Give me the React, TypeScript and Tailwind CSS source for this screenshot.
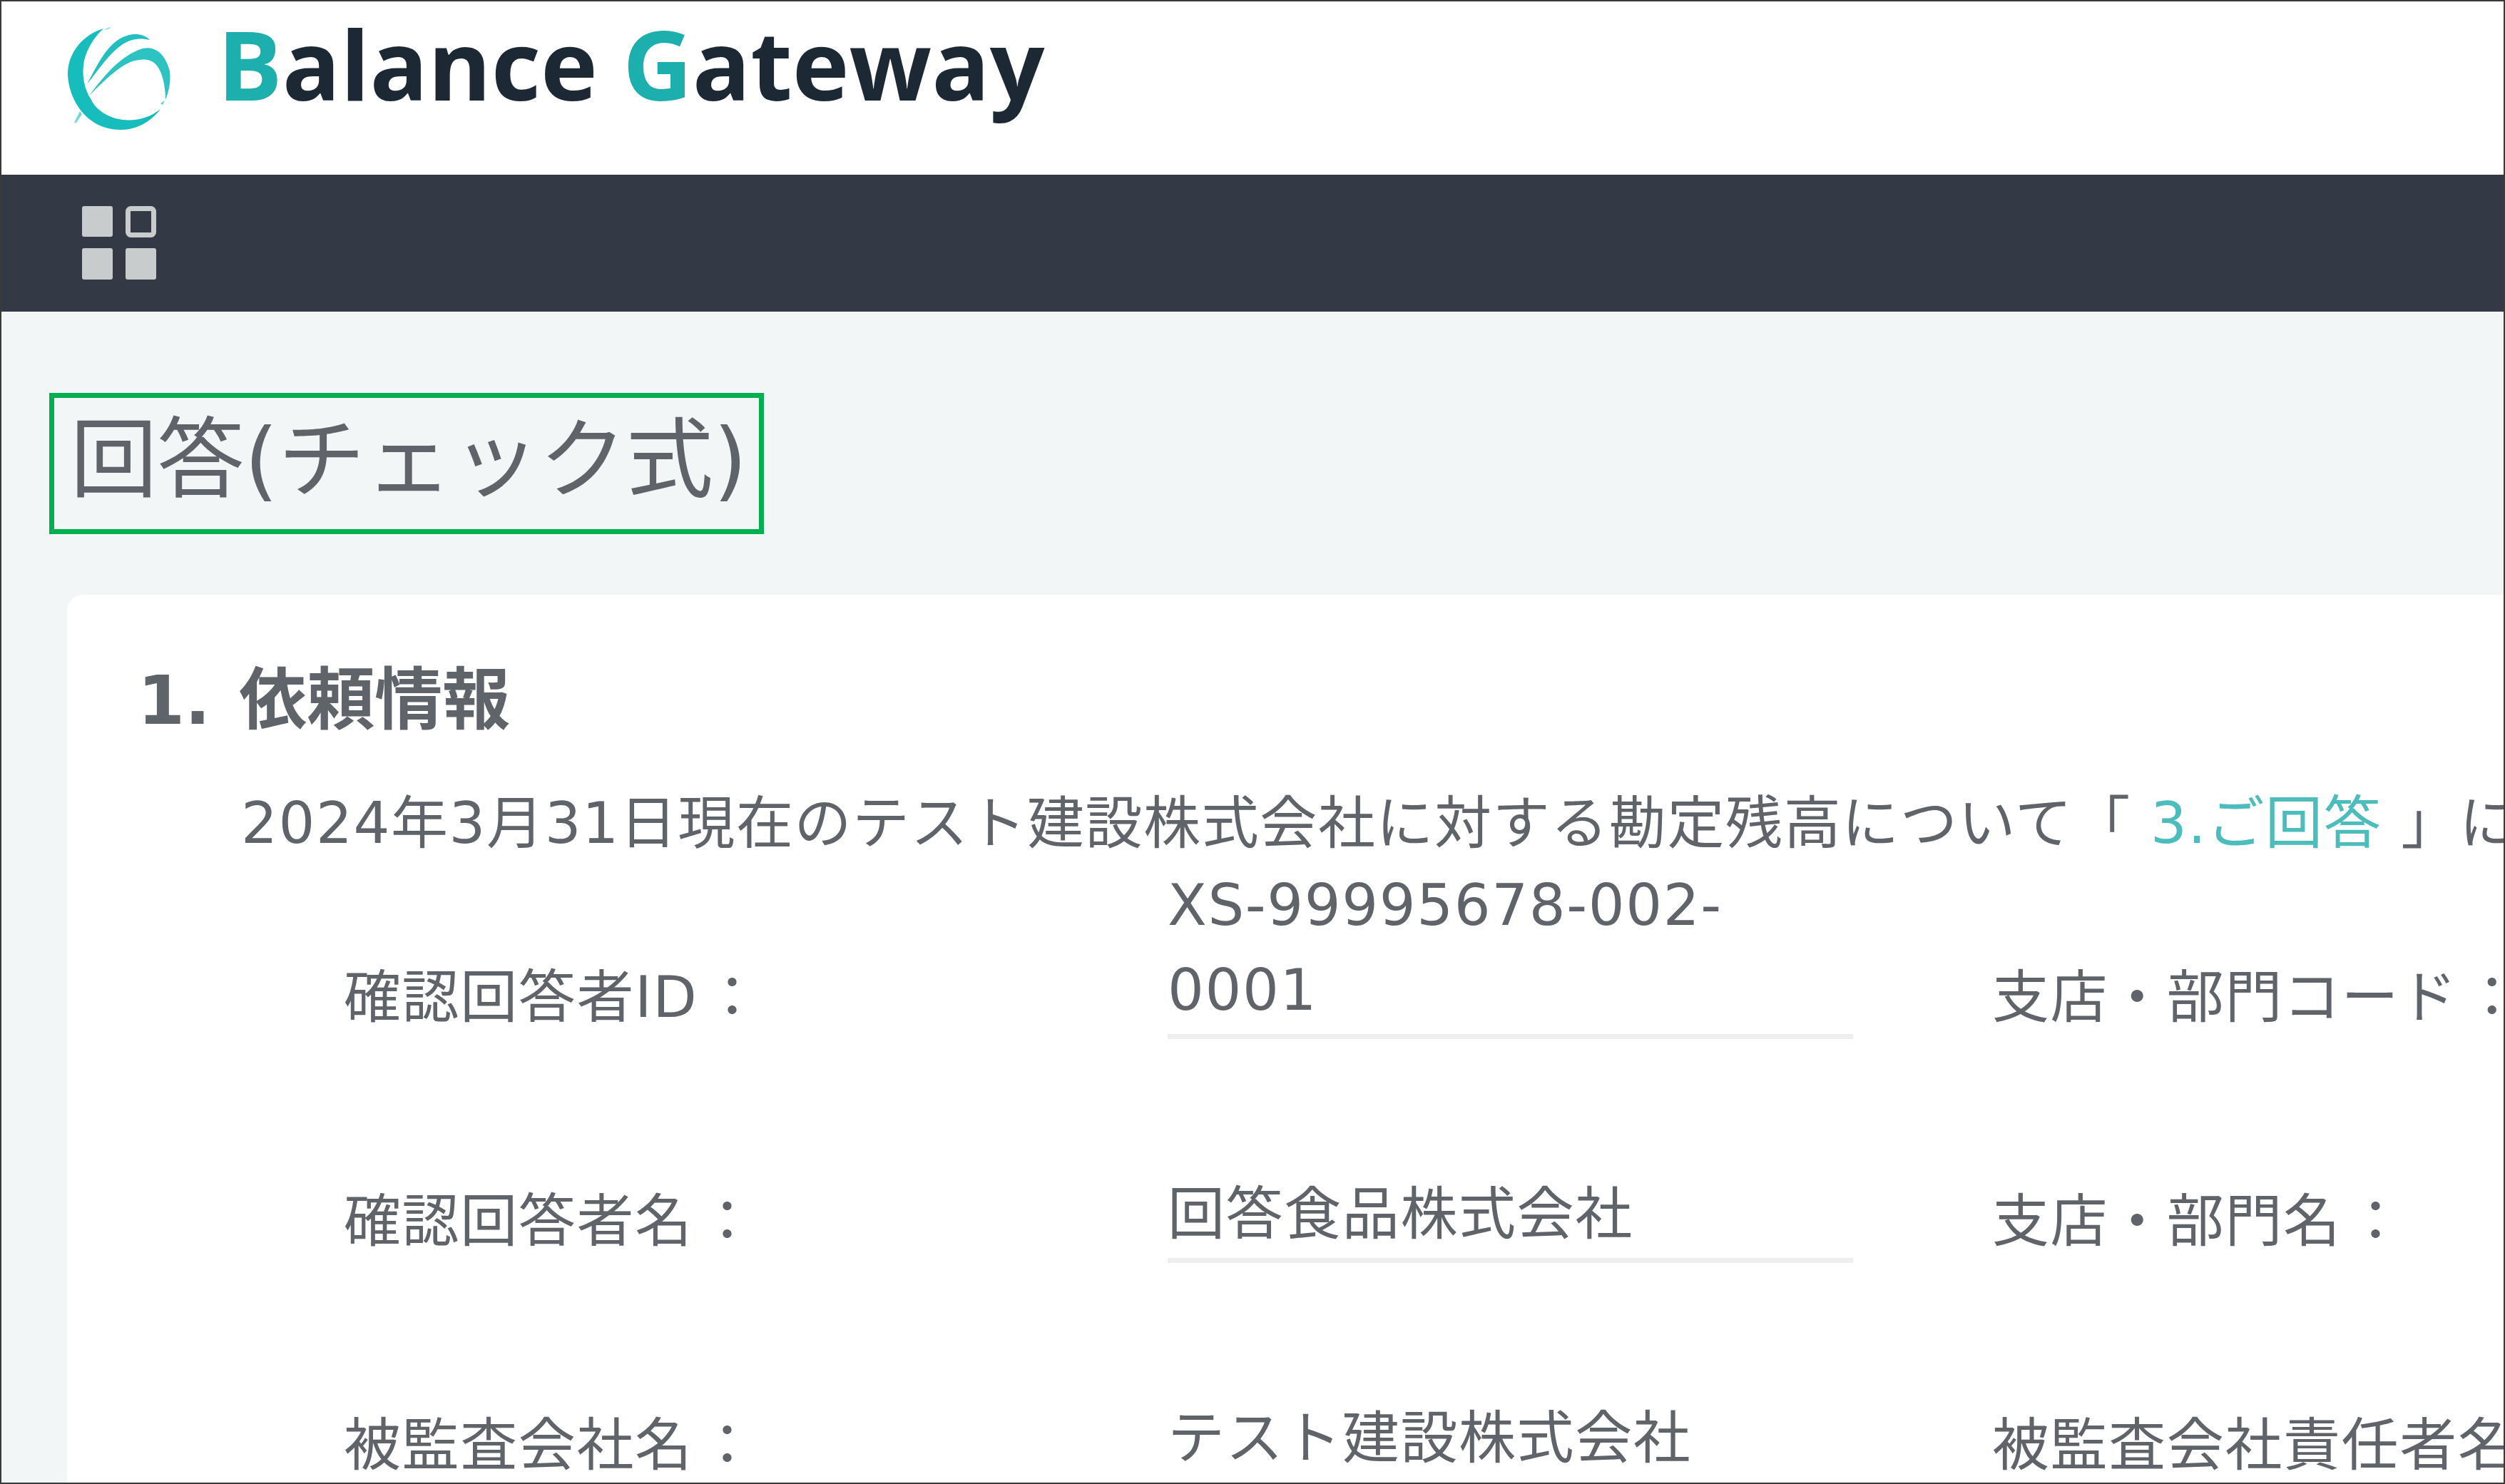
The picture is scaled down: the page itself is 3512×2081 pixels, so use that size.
import React from "react";

const jp = "font-['DejaVu_Sans','Noto_Sans_CJK_JP',sans-serif]";

const Logo = () => (
  <svg viewBox="0 0 200 200" className="w-[200px] h-[200px] shrink-0" fill="#17bcbc">
    <path d="M85 30 C58 38 36 62 35 92 C35 125 58 172 110 172 C132 172 152 160 165 143 C150 155 132 160 112 158 C90 155 74 143 68 130 C58 115 54 95 58 75 C62 58 72 42 85 30 Z" />
    <path d="M62 108 C75 85 90 48 118 40 C130 36 142 38 150 46 C138 43 124 44 112 52 C92 66 78 88 62 108 Z" opacity="0.95" />
    <path d="M65 124 C85 98 108 68 140 58 C158 54 172 66 178 90 C180 105 176 120 172 130 C172 112 168 92 160 82 C152 72 140 72 125 76 C105 84 85 104 65 124 Z" opacity="0.9" />
    <path d="M85 32 L96 27 L92 31 Z" opacity="0.5" />
    <path d="M44 162 L52 146 L55 150 L47 162 Z" opacity="0.6" />
    <path d="M165 135 L171 131 L168 137 Z" opacity="0.7" />
  </svg>
);

const MenuIcon = () => (
  <svg viewBox="0 0 104 104" className="w-[104px] h-[104px]" fill="#c8cccd">
    <rect x="0" y="0" width="43" height="43" rx="3" />
    <rect x="64.5" y="3.5" width="36" height="37" rx="4" fill="none" stroke="#c8cccd" strokeWidth="7" />
    <rect x="0" y="59" width="43" height="44" rx="3" />
    <rect x="61" y="59" width="43" height="44" rx="3" />
  </svg>
);

const Colon = () => <span className="ml-[8px]">：</span>;

const Field = ({ label, value, line = true }: { label: string; value: React.ReactNode; line?: boolean }) => (
  <>
    <div className="h-[314px] flex items-start">
      <span className="mt-[79px] whitespace-nowrap">{label}<Colon /></span>
    </div>
    <div className="h-[314px] flex flex-col justify-start">
      <div className="h-[188px] flex flex-col justify-end leading-[119px]">{value}</div>
      {line && <div className="h-[7px] mt-[2px] bg-[#eeeeee]" />}
    </div>
  </>
);

const SideLabel = ({ row, children }: { row: string; children: React.ReactNode }) => (
  <div className={`h-[314px] pl-[195px] col-start-3 ${row}`}>
    <span className="block mt-[79px] whitespace-nowrap">{children}</span>
  </div>
);

const App = () => {
  return (
    <div className={`w-[3512px] h-[2081px] overflow-hidden border-2 border-[#3a3a3a] bg-[#f3f6f7] flex flex-col text-[#5f636a] ${jp}`}>
      <header className="h-[243px] shrink-0 bg-white flex items-start pl-[58px] pt-[8px] gap-[45px]">
        <Logo />
        <h1 className="font-['Open_Sans',sans-serif] font-bold text-[135px] leading-[158px] text-[#1c2833] whitespace-nowrap">
          <span className="text-[#1cafad]">B</span>alance <span className="text-[#1cafad]">G</span>ateway
        </h1>
      </header>
      <nav className="h-[192px] shrink-0 bg-[#333a45] flex items-center pl-[113px]">
        <MenuIcon />
      </nav>
      <main className="flex-1 pl-[67px] pt-[114px]">
        <div className="w-[1002px] h-[198px] border-[7px] border-[#00b050] flex items-center justify-center pb-[10px] pl-[6px]">
          <h2 className="text-[122px] font-normal leading-none whitespace-nowrap">回答(チェック式)</h2>
        </div>
        <section className="mt-[85px] ml-[25px] w-[3600px] h-[1400px] bg-white rounded-tl-[22px] pt-[78px]">
          <h3 className="pl-[99px] text-[95px] font-bold leading-[140px] whitespace-nowrap">
            <span className="mr-[7px]">1.</span> 依頼情報
          </h3>
          <p className="pl-[244px] mt-[53px] text-[80px] font-normal leading-[100px] whitespace-nowrap tracking-[0.02em]">
            2024年3月31日現在のテスト建設株式会社に対する勘定残高について「 <span className="text-[#4cbcbc]">3.ご回答</span> 」に
          </p>
          <div className="pl-[388px] mt-[55px] grid grid-cols-[1155px_961px_1000px] text-[80px] font-normal leading-[119px] tracking-[0.02em]">
            <Field label="確認回答者ID" value={<><span>XS-99995678-002-</span><span>0001</span></>} />
            <SideLabel row="row-start-1">支店・部門コード<Colon /></SideLabel>
            <Field label="確認回答者名" value="回答食品株式会社" />
            <SideLabel row="row-start-2">支店・部門名<Colon /></SideLabel>
            <Field label="被監査会社名" value="テスト建設株式会社" line={false} />
            <SideLabel row="row-start-3">被監査会社責任者名</SideLabel>
          </div>
        </section>
      </main>
    </div>
  );
};

export default App;
